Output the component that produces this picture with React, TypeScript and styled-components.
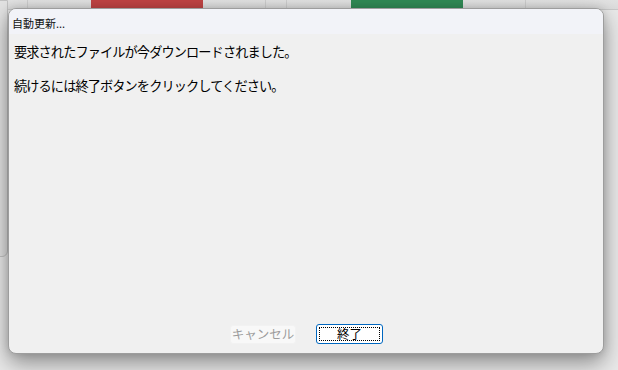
import React from "react";
import styled, { createGlobalStyle } from "styled-components";

const Global = createGlobalStyle`
  html, body { margin: 0; padding: 0; }
  body { width: 618px; height: 370px; overflow: hidden; background: #e6e6e6;
    font-family: "Noto Sans CJK JP", "Noto Sans", sans-serif; }
`;

const Desktop = styled.div`
  position: relative;
  width: 618px;
  height: 370px;
  overflow: hidden;
  background: #e4e4e4;
`;

const BackWindow = styled.div`
  position: absolute;
  left: 0;
  top: 0;
  width: 618px;
  height: 370px;
  display: flex;
  flex-direction: column;
  background: #e9e9e9;
`;

const Strip = styled.div`
  display: flex;
  height: 9px;
  background: linear-gradient(#e2e2e2, #dcdcdc);
  border-bottom: 1px solid #c9c9c9;
`;

const Cell = styled.div<{ $w: number; $color?: string; $line?: boolean }>`
  width: ${(p) => p.$w}px;
  flex: none;
  background: ${(p) => p.$color ?? "transparent"};
  border-right: ${(p) => (p.$line ? "1px solid #cdcdcd" : "none")};
  box-sizing: border-box;
`;

const SideEdge = styled.div`
  position: absolute;
  left: -10px;
  top: 0;
  width: 16px;
  height: 255px;
  border: 1px solid #c2c2c2;
  border-radius: 0 0 6px 0;
  background: #e2e2e2;
`;

const Dialog = styled.div`
  position: absolute;
  left: 8px;
  top: 8px;
  width: 596px;
  height: 346px;
  box-sizing: border-box;
  border: 1px solid #9d9d9d;
  border-radius: 8px;
  background: #f0f0f0;
  overflow: hidden;
  display: flex;
  flex-direction: column;
  box-shadow: 0 9px 22px rgba(0, 0, 0, 0.4), 0 0 8px rgba(0, 0, 0, 0.12);
`;

const TitleBar = styled.div`
  height: 25px;
  flex: none;
  background: #f2f3f8;
  display: flex;
  align-items: center;
  padding-left: 3px;
  font-size: 11px;
  color: #111;
  padding-top: 2px;
  box-sizing: border-box;
`;

const Body = styled.div`
  flex: 1;
  display: flex;
  flex-direction: column;
  padding: 8px 0 0 5px;
`;

const Message = styled.p`
  margin: 0;
  font-size: 13.2px;
  font-weight: 400;
  letter-spacing: -0.9px;
  line-height: 20px;
  color: #000;
  & + & { margin-top: 14px; }
`;

const Footer = styled.div`
  margin-top: auto;
  display: flex;
  justify-content: center;
  gap: 20px;
  padding: 0 4px 9px 0;
`;

const Button = styled.button<{ $primary?: boolean }>`
  position: relative;
  width: ${(p) => (p.$primary ? 67 : 66)}px;
  height: ${(p) => (p.$primary ? 20 : 19)}px;
  margin-top: ${(p) => (p.$primary ? 0 : 1)}px;
  padding: 0;
  box-sizing: border-box;
  font-family: inherit;
  font-size: 12.5px;
  line-height: 1;
  border-radius: 3px;
  border: 1px solid ${(p) => (p.$primary ? "#0067c0" : "#f2f2f2")};
  background: ${(p) => (p.$primary ? "#ffffff" : "#f8f8f8")};
  color: ${(p) => (p.$primary ? "#000" : "#9c9c9c")};
  display: flex;
  align-items: center;
  justify-content: center;
`;

const FocusRing = styled.span`
  position: absolute;
  inset: 2px;
  border: 1px dotted #000;
  pointer-events: none;
`;

export default function App() {
  return (
    <Desktop>
      <Global />
      <BackWindow>
        <Strip>
          <Cell $w={28} $line />
          <Cell $w={63} />
          <Cell $w={112} $color="#c04444" />
          <Cell $w={63} $line />
          <Cell $w={21} $line />
          <Cell $w={64} />
          <Cell $w={112} $color="#318a55" />
          <Cell $w={63} $line />
          <Cell $w={92} />
        </Strip>
      </BackWindow>
      <SideEdge />
      <Dialog>
        <TitleBar>自動更新...</TitleBar>
        <Body>
          <Message>要求されたファイルが今ダウンロードされました。</Message>
          <Message>続けるには終了ボタンをクリックしてください。</Message>
          <Footer>
            <Button disabled>キャンセル</Button>
            <Button $primary>
              終了
              <FocusRing />
            </Button>
          </Footer>
        </Body>
      </Dialog>
    </Desktop>
  );
}
